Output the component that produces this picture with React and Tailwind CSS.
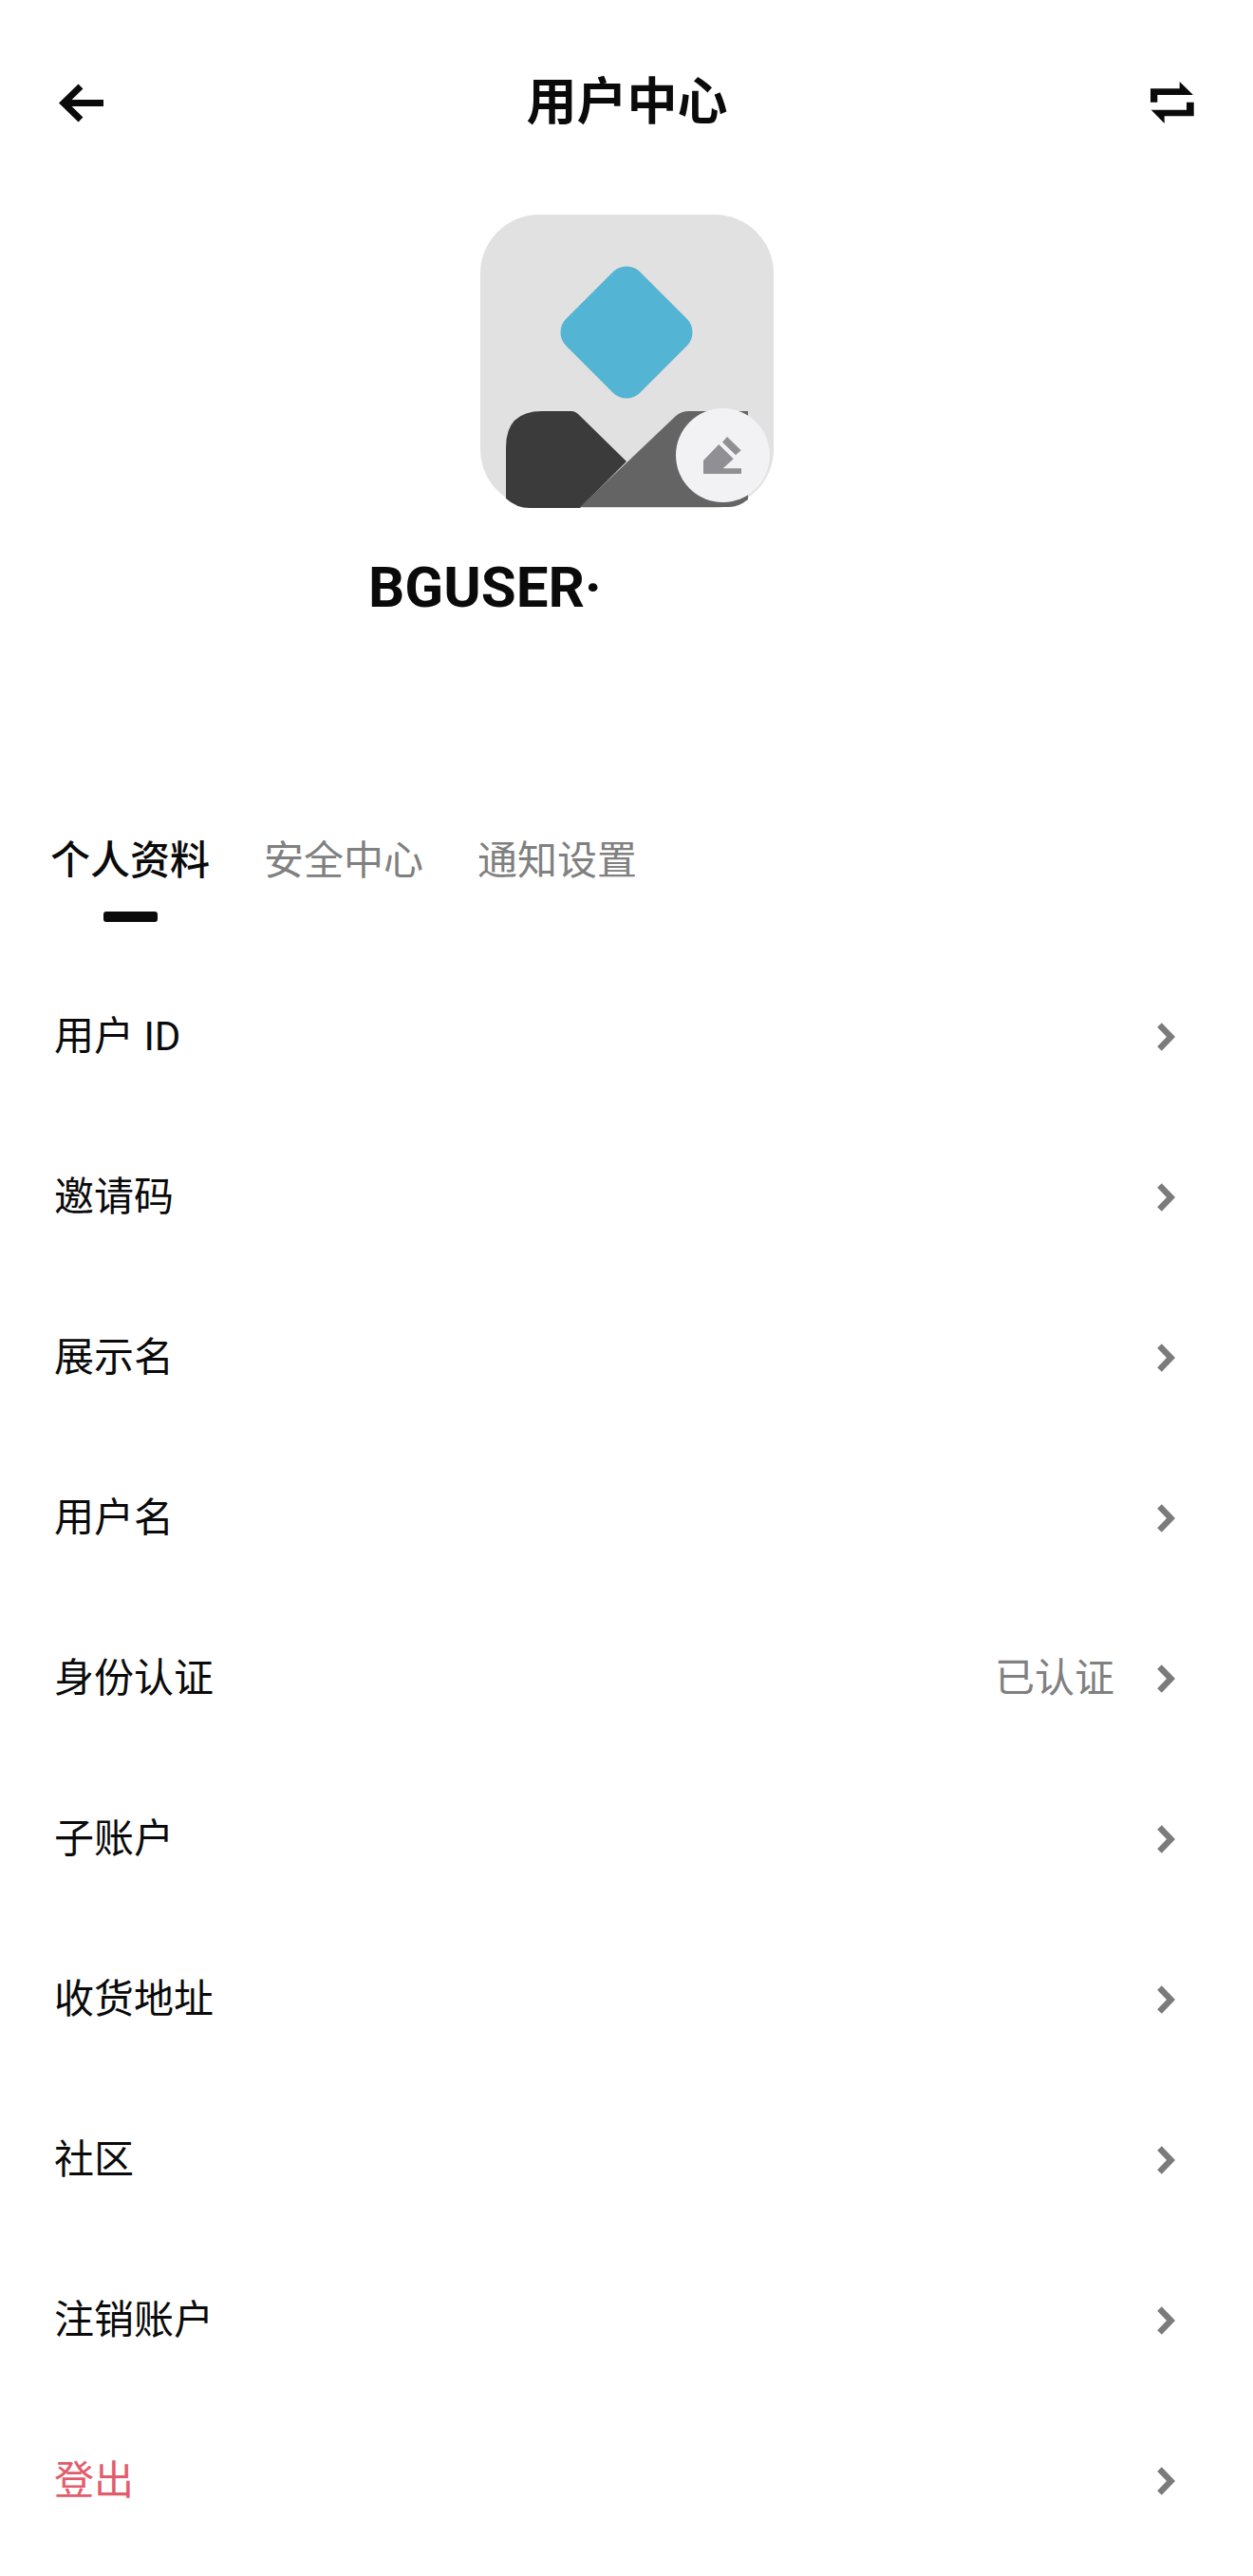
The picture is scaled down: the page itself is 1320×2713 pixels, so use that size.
import React from 'react';

const rows = [
  { label: '用户 ID' },
  { label: '邀请码' },
  { label: '展示名' },
  { label: '用户名' },
  { label: '身份认证', value: '已认证' },
  { label: '子账户' },
  { label: '收货地址' },
  { label: '社区' },
  { label: '注销账户' },
  { label: '登出', danger: true },
];

const tabs = ['个人资料', '安全中心', '通知设置'];

const Chevron = () => (
  <svg viewBox="0 0 19 30" className="w-[19px] h-[30px] shrink-0">
    <path d="M2.5 2.5 14.5 15 2.5 27.5" fill="none" stroke="#7b7b7d" strokeWidth="6.5" />
  </svg>
);

const Avatar = () => (
  <div className="relative w-[309px] h-[309px]">
    <svg viewBox="0 0 309 309" className="w-full h-full">
      <rect width="309" height="309" rx="62" fill="#e1e1e1" />
      <rect x="99" y="69" width="110" height="110" rx="20" transform="rotate(45 154 124)" fill="#54b4d3" />
      <path d="M27 299V245Q27 207 65 207H96Q100 207 104 211L154 260 105 309H52Q38 309 27 299Z" fill="#3b3b3b" />
      <path d="M105 308 206 212Q212 207 220 207H282V300Q272 308 262 308Z" fill="#646464" />
    </svg>
    <div className="absolute left-[206px] top-[204px] w-[99px] h-[99px] rounded-full bg-[#f2f2f4] flex items-center justify-center">
      <svg viewBox="0 0 40 39" className="w-[40px] h-[39px]">
        <path d="M0 39V25L16.3 8 31.7 23.3 20.7 33.3H40V39Z" fill="#8f8f94" />
        <path d="M20 5.7 25 0 39.7 14.3 34 19.3Z" fill="#8f8f94" />
      </svg>
    </div>
  </div>
);

export default function App() {
  return (
    <div className="w-[1320px] h-[2713px] bg-white overflow-hidden font-['Roboto','Noto_Sans_CJK_SC',sans-serif]">
      <header className="flex items-center justify-between pl-[62px] pr-[62px] pt-[84px] h-[132px]">
        <svg viewBox="0 0 47 41" className="w-[47px] h-[41px]">
          <path d="M23 3 5 20.5 23 38M6 20.5H47" fill="none" stroke="#0a0a0a" strokeWidth="7" />
        </svg>
        <h1 className="text-[53px] leading-[60px] font-bold text-[#0a0a0a]">用户中心</h1>
        <svg viewBox="0 0 46 44" className="w-[46px] h-[44px]">
          <path d="M0 7.3H30.7V0L45 14H7.3V21.7H0Z" fill="#0a0a0a" />
          <path d="M45.7 21.7V36.3H14.7V44L0.7 29.7H38V21.7Z" fill="#0a0a0a" />
        </svg>
      </header>

      <div className="flex justify-center mt-[94px]">
        <Avatar />
      </div>

      <div className="pl-[388px] mt-[50px] text-[60px] leading-[68px] font-bold text-[#0a0a0a]">BGUSER·</div>

      <nav className="flex gap-[57px] pl-[53px] mt-[226px] text-[42px] leading-[56px]">
        {tabs.map((t, i) => (
          <div key={t} className="relative">
            <span className={i === 0 ? 'font-medium text-[#0a0a0a]' : 'text-[#808080]'}>{t}</span>
            {i === 0 && (
              <div className="absolute left-[56px] top-[81px] w-[57px] h-[11px] rounded-[3px] bg-[#0a0a0a]" />
            )}
          </div>
        ))}
      </nav>

      <ul className="mt-[72px]">
        {rows.map(r => (
          <li key={r.label} className="flex items-center justify-between h-[169px] pl-[57px] pr-[82px] text-[42px]">
            <span className={r.danger ? 'text-[#e25c6c]' : 'text-[#0a0a0a]'}>{r.label}</span>
            <span className="flex items-center gap-[45px]">
              {r.value && <span className="text-[#808080]">{r.value}</span>}
              <Chevron />
            </span>
          </li>
        ))}
      </ul>
    </div>
  );
}
